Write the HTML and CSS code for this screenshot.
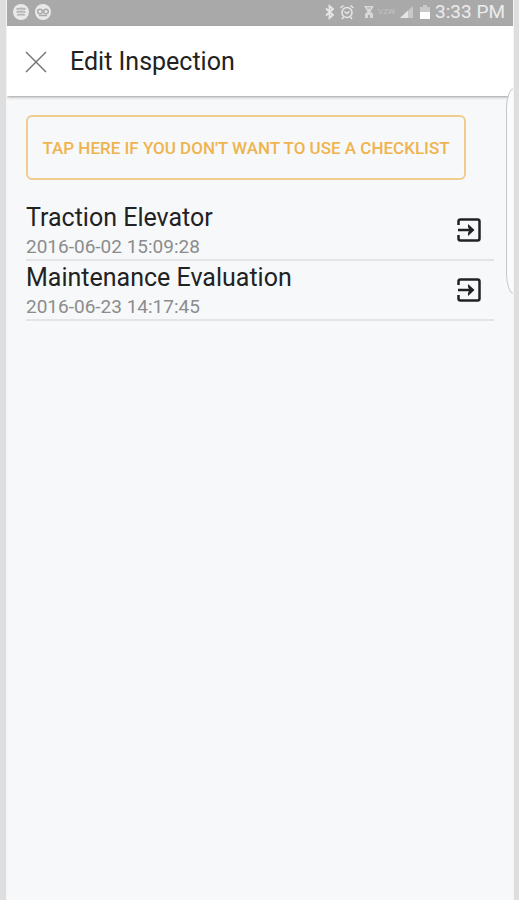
FILE: index.html
```html
<!DOCTYPE html>
<html lang="en">
<head>
<meta charset="utf-8">
<meta name="viewport" content="width=device-width, initial-scale=1">
<title>Edit Inspection</title>
<link rel="stylesheet" href="styles.css">
</head>
<body>
<div class="screen">
  <div class="status">
    <div class="group apps">
      <svg width="18" height="18" viewBox="0 0 18 18"><circle cx="9" cy="9" r="8" fill="#e9e9e9"/><path d="M4.500 6q4.500-1 9 0M4.500 9q4.500-1 9 0M5 12q4-1 8 0" fill="none" stroke="#b8b8b8" stroke-width="1.800"/></svg>
      <svg width="18" height="18" viewBox="0 0 18 18"><circle cx="9" cy="9" r="8" fill="#e9e9e9"/><g fill="none" stroke="#aaa" stroke-width="1.500"><circle cx="6" cy="8.500" r="2.300"/><circle cx="12" cy="8.500" r="2.300"/><path d="M5 12.500h8"/></g></svg>
    </div>
    <div class="group">
      <svg width="12" height="16" viewBox="0 0 12 16"><path d="M2 4.500l7 6.500-3.500 3V2L9 5l-7 6.500" fill="none" stroke="#e6e6e6" stroke-width="1.800"/></svg>
      <svg width="16" height="16" viewBox="0 0 16 16"><g fill="none" stroke="#e6e6e6" stroke-width="1.500"><circle cx="8" cy="8.500" r="5"/><path d="M1.500 4l3-2.500M14.500 4l-3-2.500M5.500 7.500L8 9.500l2.500-2M4.500 13L3 15M11.500 13l1.500 2"/></g></svg>
      <svg class="wifi" width="12" height="16" viewBox="0 0 12 16"><path d="M1 2h10L7.500 7.500 10 10v4H7v-3H5v3H2v-4l2.500-2.500z" fill="#d8d8d8"/><path d="M4 4h4" stroke="#aaa"/></svg>
      <span class="carrier">VZW</span>
      <svg width="15" height="16" viewBox="0 0 15 16"><path d="M1 14L14 2v12z" fill="#c8c8c8"/><path d="M1 14l8-7.500V14z" fill="#e5e5e5"/></svg>
      <svg class="battery" width="12" height="16" viewBox="0 0 12 16"><path d="M1 3h3V1h4v2h3v12H1z" fill="#c9c9c9"/><path d="M1 8h10v7H1z" fill="#fff"/></svg>
      <span class="time">3:33 PM</span>
    </div>
  </div>
  <header class="bar">
    <button class="close" type="button" aria-label="Close"><svg width="22" height="22" viewBox="0 0 22 22"><path d="M1 1l20 20M21 1L1 21" stroke="#777" stroke-width="1.500"/></svg></button>
    <h1>Edit Inspection</h1>
  </header>
  <main>
    <button class="skip" type="button">TAP HERE IF YOU DON'T WANT TO USE A CHECKLIST</button>
    <ul class="list">
      <li>
        <div><h2>Traction Elevator</h2><time datetime="2016-06-02T15:09:28">2016-06-02 15:09:28</time></div>
        <button class="open" type="button" aria-label="Open Traction Elevator"><svg width="24" height="24" viewBox="0 0 24 24"><path d="M1.500 7V3.500q0-2 2-2h17q2 0 2 2v17q0 2-2 2h-17q-2 0-2-2V17" fill="none" stroke="#222" stroke-width="2.500"/><path d="M1 12h13" stroke="#222" stroke-width="2.500"/><path d="M11 6l6.500 6-6.500 6v-3l1.500-3-1.500-3z" fill="#222"/></svg></button>
      </li>
      <li>
        <div><h2>Maintenance Evaluation</h2><time datetime="2016-06-23T14:17:45">2016-06-23 14:17:45</time></div>
        <button class="open" type="button" aria-label="Open Maintenance Evaluation"><svg width="24" height="24" viewBox="0 0 24 24"><path d="M1.500 7V3.500q0-2 2-2h17q2 0 2 2v17q0 2-2 2h-17q-2 0-2-2V17" fill="none" stroke="#222" stroke-width="2.500"/><path d="M1 12h13" stroke="#222" stroke-width="2.500"/><path d="M11 6l6.500 6-6.500 6v-3l1.500-3-1.500-3z" fill="#222"/></svg></button>
      </li>
    </ul>
  </main>
  <div class="edge"></div>
</div>
</body>
</html>
```
FILE: styles.css
```css
* { box-sizing: border-box; }
body { margin: 0; background: #dedede; font-family: Roboto, sans-serif; color: #222; }
button { margin: 0; padding: 0; border: 0; background: none; font-family: inherit; cursor: pointer; }
svg { display: block; flex: none; }
h1, h2 { margin: 0; font-weight: 400; }
.screen { position: relative; min-height: 100vh; margin: 0 5px 0 6px; overflow: hidden; background: #f6f8fa; border-left: 1px solid #f4f4f4; border-right: 1px solid #f4f4f4; }
.status { display: flex; justify-content: space-between; height: 26px; padding: 0 8px 2px 5px; background: #a9a9a9; color: #ececec; }
.group { display: flex; align-items: center; gap: 3px; }
.group.apps { gap: 4px; }
.wifi { margin-left: 5px; }
.carrier { width: 18px; font-size: 8px; line-height: 16px; color: #c4c4c4; }
.battery { margin-left: 2px; }
.time { margin-left: 1px; font-size: 19px; line-height: 24px; white-space: nowrap; }
.bar { display: flex; align-items: center; gap: 23px; height: 70px; padding: 2px 18px 0; background: #fff; box-shadow: 0 1px 3px #999; }
.bar h1 { font-size: 25px; line-height: 32px; }
main { padding: 19px 19px 0; }
.skip { display: block; width: calc(100% - 28px); height: 65px; border: 2px solid #f2cb8e; border-radius: 6px; color: #efb44e; font-size: 17px; font-weight: 500; white-space: nowrap; }
.list { margin: 21px 0 0; padding: 0; list-style: none; }
.list li { display: flex; justify-content: space-between; align-items: center; height: 60px; padding-right: 13px; border-bottom: 2px solid #e2e4e6; }
.list h2 { font-size: 25px; line-height: 34px; }
.list time { display: block; font-size: 19px; line-height: 24px; color: #8c8c8c; }
.edge { position: absolute; top: 88px; right: -9px; width: 16px; height: 206px; border: 1px solid #c4c6c8; border-radius: 10px / 26px; background: #fafbfc; }
```
